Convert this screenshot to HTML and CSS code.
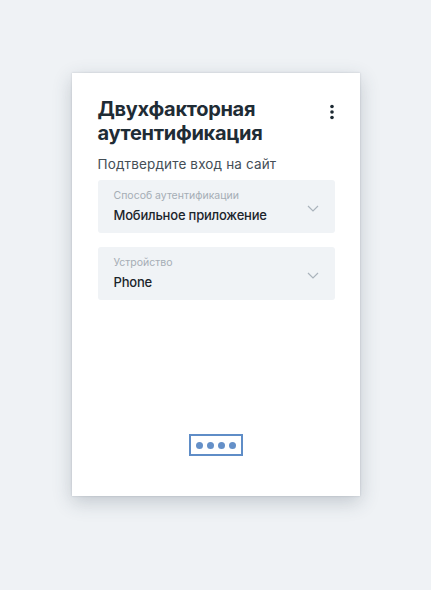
FILE: index.html
```html
<!DOCTYPE html>
<html lang="ru">
<head>
<meta charset="utf-8">
<link rel="stylesheet" href="styles.css">
</head>
<body>
<div class="page">
  <div class="card">
    <div class="header">
      <h1 class="title">Двухфакторная аутентификация</h1>
      <button class="menu" aria-label="Меню">
        <svg width="6" height="16" viewBox="0 0 6 16"><circle cx="3" cy="2.5" r="1.8" fill="#1d2a33"/><circle cx="3" cy="8" r="1.8" fill="#1d2a33"/><circle cx="3" cy="13.5" r="1.8" fill="#1d2a33"/></svg>
      </button>
    </div>
    <p class="subtitle">Подтвердите вход на сайт</p>
    <div class="select">
      <div class="select-text">
        <div class="label">Способ аутентификации</div>
        <div class="value">Мобильное приложение</div>
      </div>
      <svg class="chev" width="12" height="7" viewBox="0 0 12 7"><path d="M1 1l5 5 5-5" fill="none" stroke="#aab3bc" stroke-width="1.2"/></svg>
    </div>
    <div class="select">
      <div class="select-text">
        <div class="label">Устройство</div>
        <div class="value">Phone</div>
      </div>
      <svg class="chev" width="12" height="7" viewBox="0 0 12 7"><path d="M1 1l5 5 5-5" fill="none" stroke="#aab3bc" stroke-width="1.2"/></svg>
    </div>
    <div class="spacer"></div>
    <div class="code">
      <span class="dot"></span><span class="dot"></span><span class="dot"></span><span class="dot"></span>
    </div>
  </div>
</div>
</body>
</html>
```
FILE: styles.css
```css
html, body {
  margin: 0;
  padding: 0;
  background: #eff2f5;
  font-family: Inter, "Noto Sans", "Liberation Sans", sans-serif;
}
.page {
  display: flex;
  justify-content: center;
  align-items: flex-start;
  padding-top: 73px;
  min-height: 590px;
  box-sizing: border-box;
}
.card {
  width: 288px;
  height: 423px;
  box-sizing: border-box;
  background: #fff;
  box-shadow: 0 6px 18px rgba(50, 65, 85, 0.24), 0 0 2px rgba(50, 65, 85, 0.2);
  padding: 24px 25px 40px 26px;
  display: flex;
  flex-direction: column;
}
.header {
  display: flex;
  justify-content: space-between;
  align-items: flex-start;
}
.title {
  margin: 0;
  font-size: 20px;
  line-height: 24px;
  font-weight: 700;
  color: #1f2c35;
  width: 200px;
  letter-spacing: -0.3px;
}
.menu {
  border: 0;
  background: none;
  padding: 0;
  margin: 7px 0 0 0;
  width: 6px;
  height: 16px;
  display: flex;
}
.subtitle {
  margin: 10px 0 7px;
  font-size: 13.5px;
  line-height: 18px;
  color: #444e56;
  letter-spacing: 0.15px;
}
.select {
  background: #f0f3f6;
  border-radius: 3px;
  height: 53px;
  box-sizing: border-box;
  padding: 9px 16px 0 16px;
  display: flex;
  justify-content: space-between;
  margin-bottom: 14px;
}
.label {
  font-size: 10.5px;
  line-height: 14px;
  color: #a5adb5;
}
.value {
  margin-top: 3px;
  font-size: 13px;
  line-height: 18px;
  color: #1b242b;
  font-weight: 500;
  letter-spacing: -0.2px;
}
.chev {
  margin-top: 16px;
}
.spacer {
  flex: 1;
}
.code {
  align-self: center;
  width: 54px;
  height: 22px;
  box-sizing: border-box;
  border: 2px solid #5f8dc7;
  display: flex;
  align-items: center;
  justify-content: center;
  gap: 4px;
}
.dot {
  width: 7px;
  height: 7px;
  border-radius: 50%;
  background: #6590c8;
}
```
